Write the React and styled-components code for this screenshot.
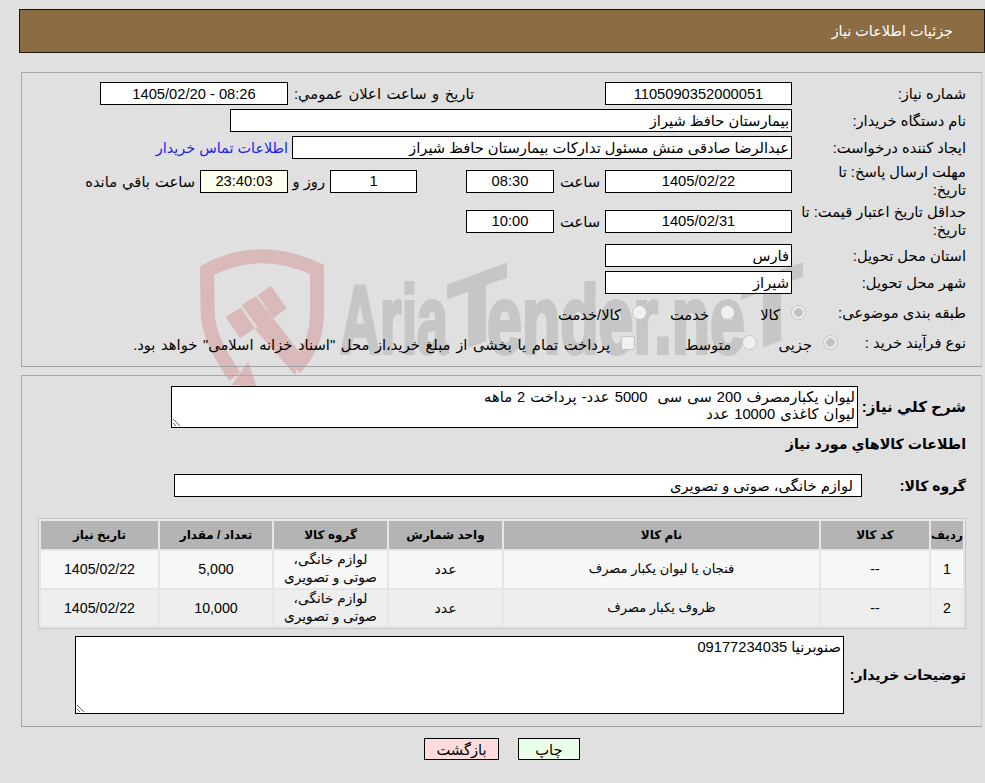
import styled, { createGlobalStyle } from "styled-components";

const GlobalStyle = createGlobalStyle`
  html, body {
    margin: 0;
    padding: 0;
    background: #e0e0e0;
  }
  body {
    color: #000;
    font-family: "Liberation Sans", "DejaVu Sans", sans-serif;
    font-size: 14.7px;
  }
`;

const Page = styled.div`
  position: relative;
  direction: rtl;
  width: 985px;
  height: 783px;
  overflow: hidden;
  padding-top: 9px;
  box-sizing: border-box;
`;

const Watermark = styled.svg`
  position: absolute;
  left: 190px;
  top: 240px;
`;

const Header = styled.div`
  position: relative;
  display: flex;
  align-items: center;
  box-sizing: border-box;
  height: 44px;
  margin-left: 19px;
  padding-right: 31px;
  background: #8c6c42;
  border: 1px solid #1a1408;
  color: #fff;
  font-size: 14.4px;
`;

const Panel = styled.div`
  position: relative;
  box-sizing: border-box;
  margin: ${(p) => p.$top}px 3px 0 21px;
  height: ${(p) => p.$height}px;
  padding: ${(p) => p.$pad}px 15px 0 0;
  border: 1px solid #a8a8a8;
  border-right-color: #c8c8c8;
  border-bottom-color: #a0a0a0;
`;

const Row = styled.div`
  display: flex;
  align-items: center;
  height: ${(p) => p.$h || 23}px;
  margin-top: ${(p) => p.$top ?? 4}px;
`;

const Label = styled.div`
  flex: none;
  box-sizing: border-box;
  width: ${(p) => p.$w || 174}px;
  line-height: 18px;
  font-weight: ${(p) => (p.$size ? 700 : 400)};
  font-size: ${(p) => (p.$size ? `${p.$size}px` : "inherit")};
`;

const Caption = styled.span`
  flex: none;
  width: ${(p) => p.$w}px;
  margin-right: ${(p) => p.$mr || 5}px;
  white-space: nowrap;
  word-spacing: ${(p) => p.$spread || 0}px;
`;

const Field = styled.input.attrs({ readOnly: true })`
  flex: none;
  box-sizing: border-box;
  width: ${(p) => p.$w}px;
  height: 23px;
  margin: 0 ${(p) => p.$mr || 0}px 0 0;
  padding: 0 ${(p) => p.$inset || 2}px;
  border: 1px solid #000;
  border-radius: 0;
  outline: none;
  background: ${(p) => p.$bg || "#fff"};
  color: #000;
  font: inherit;
  text-align: ${(p) => (p.$center ? "center" : "right")};
`;

const ContactLink = styled.a`
  margin-right: 4px;
  color: #2222ee;
  font-size: 14.4px;
  white-space: nowrap;
`;

const Option = styled.label`
  flex: none;
  display: flex;
  align-items: center;
  gap: 11px;
  width: ${(p) => p.$w}px;
  white-space: nowrap;
`;

const OptionText = styled.span`
  position: relative;
  top: 2px;
  word-spacing: ${(p) => p.$spread || 0}px;
`;

const Radio = styled.input.attrs({ type: "radio", disabled: true })`
  flex: none;
  appearance: none;
  box-sizing: border-box;
  width: 15px;
  height: 15px;
  margin: 0;
  border: 1px solid #c4c4c4;
  border-radius: 50%;
  background: #f0f0f0;

  &:checked {
    background: radial-gradient(circle, #c2c2c2 0 4px, #ececec 4.6px);
  }
`;

const Tick = styled.input.attrs({ type: "checkbox", disabled: true })`
  flex: none;
  appearance: none;
  box-sizing: border-box;
  width: 14px;
  height: 14px;
  margin: 0;
  border: 1px solid #c4c4c4;
  border-radius: 2px;
  background: #f0f0f0;
`;

const Note = styled.textarea.attrs({ readOnly: true })`
  flex: none;
  display: block;
  box-sizing: border-box;
  width: ${(p) => p.$w}px;
  height: ${(p) => p.$h}px;
  margin: 0;
  padding: 2px 2px 0;
  border: 1px solid #000;
  border-radius: 0;
  outline: none;
  background: #fff;
  color: #000;
  font: inherit;
  line-height: 17px;
  word-spacing: ${(p) => p.$spread || 0}px;
  overflow: hidden;
`;

const Grid = styled.table`
  box-sizing: border-box;
  width: 928px;
  height: 111px;
  margin: 21px 0 0 0;
  border: 1px solid #c6c6c6;
  border-spacing: 2px;
  background: #e6e6e6;
  table-layout: fixed;
  font-size: 14.2px;
`;

const Head = styled.th`
  height: 28px;
  padding: 0;
  background: #b4b4b4;
  font-size: 12px;
  font-weight: 700;
`;

const Cell = styled.td`
  padding: 0;
  background: ${(p) => (p.$even ? "#eeeeee" : "#f7f7f7")};
  font-size: ${(p) => p.$size}px;
  line-height: 18px;
  text-align: center;
  white-space: pre-line;
`;

const Actions = styled.div`
  display: flex;
  justify-content: center;
  gap: 19px;
  margin-top: 11px;
  padding-left: 19px;
`;

const Button = styled.button`
  box-sizing: border-box;
  width: ${(p) => p.$w}px;
  height: 22px;
  padding: 0;
  border: 1px solid #000;
  background: ${(p) => p.$bg};
  color: #000;
  font: inherit;
`;

const columns = [
  { title: "ردیف", width: 32, size: 14.2 },
  { title: "کد کالا", width: 108, size: 14.2 },
  { title: "نام کالا", width: 315, size: 13 },
  { title: "واحد شمارش", width: 113, size: 14.2 },
  { title: "گروه کالا", width: 113, size: 13.7 },
  { title: "تعداد / مقدار", width: 112, size: 14.2 },
  { title: "تاریخ نیاز", width: 117, size: 14.2 },
];

const items = [
  ["1", "--", "فنجان یا لیوان یکبار مصرف", "عدد", "لوازم خانگی،\nصوتی و تصویری", "5,000", "1405/02/22"],
  ["2", "--", "ظروف یکبار مصرف", "عدد", "لوازم خانگی،\nصوتی و تصویری", "10,000", "1405/02/22"],
];

function Logo() {
  return (
    <Watermark width="620" height="150" viewBox="0 0 620 150">
      <g transform="scale(0.3333)" fill="#d9b9b9">
        <path
          d="M315 385 C365 330 380 280 381 220 L381 88 C325 62 270 49 215 49 C160 49 105 62 51 92 L53 220 C55 280 85 340 135 410"
          fill="none"
          stroke="#d9b9b9"
          strokeWidth="42"
        />
        <polygon points="175,365 200,440 125,435" />
        <polygon points="195,268 250,235 335,345 315,405" />
        <polygon points="107,230 152,203 195,265 150,295" />
        <polygon points="155,195 197,168 250,235 205,265" />
        <polygon points="203,165 243,138 290,205 250,235" />
      </g>
      <g fill="#c6c6c6" stroke="#c6c6c6" strokeWidth="4" fontFamily="Liberation Sans" fontWeight="700" fontSize="97" direction="ltr">
        <text x="150" y="113" textLength="108" lengthAdjust="spacingAndGlyphs">Aria</text>
        <text transform="translate(258 113) skewY(-20)" textLength="58" lengthAdjust="spacingAndGlyphs">T</text>
        <text x="297" y="113" textLength="258" lengthAdjust="spacingAndGlyphs">ender.ne</text>
        <text transform="translate(552 113) skewY(-20)" textLength="60" lengthAdjust="spacingAndGlyphs">T</text>
      </g>
    </Watermark>
  );
}

export default function App() {
  return (
    <Page>
      <GlobalStyle />
      <Logo />
      <Header>جزئیات اطلاعات نیاز</Header>

      <Panel $top={19} $height={295} $pad={9}>
        <Row $top={0}>
          <Label>شماره نیاز:</Label>
          <Field $w={187} $center value="1105090352000051" />
          <Caption $w={181} $mr={131} $spread={1.5}>تاريخ و ساعت اعلان عمومي:</Caption>
          <Field $w={188} $mr={5} $center value="08:26 - 1405/02/20" />
        </Row>
        <Row>
          <Label>نام دستگاه خریدار:</Label>
          <Field $w={562} value="بیمارستان حافظ شیراز" />
        </Row>
        <Row>
          <Label>ایجاد کننده درخواست:</Label>
          <Field $w={500} value="عبدالرضا صادقی منش مسئول تدارکات بیمارستان حافظ شیراز" />
          <ContactLink>اطلاعات تماس خریدار</ContactLink>
        </Row>
        <Row $h={40} $top={2}>
          <Label>مهلت ارسال پاسخ: تا<br />تاریخ:</Label>
          <Field $w={187} $center value="1405/02/22" />
          <Caption $w={46}>ساعت</Caption>
          <Field $w={88} $center value="08:30" />
          <Field $w={87} $mr={49} $center value="1" />
          <Caption $w={37}>روز و</Caption>
          <Field $w={88} $center $bg="#ffffee" value="23:40:03" />
          <Caption $w={112} $spread={1}>ساعت باقي مانده</Caption>
        </Row>
        <Row $h={40} $top={0}>
          <Label>حداقل تاریخ اعتبار قیمت: تا<br />تاریخ:</Label>
          <Field $w={187} $center value="1405/02/31" />
          <Caption $w={46}>ساعت</Caption>
          <Field $w={88} $center value="10:00" />
        </Row>
        <Row $top={3}>
          <Label>استان محل تحویل:</Label>
          <Field $w={187} value="فارس" />
        </Row>
        <Row>
          <Label>شهر محل تحویل:</Label>
          <Field $w={187} value="شیراز" />
        </Row>
        <Row $top={7}>
          <Label $w={160}>طبقه بندی موضوعی:</Label>
          <Option $w={71}><Radio name="kind" defaultChecked /><OptionText>کالا</OptionText></Option>
          <Option $w={88}><Radio name="kind" /><OptionText>خدمت</OptionText></Option>
          <Option $w={100}><Radio name="kind" /><OptionText>کالا/خدمت</OptionText></Option>
        </Row>
        <Row $top={7}>
          <Label $w={128}>نوع فرآیند خرید :</Label>
          <Option $w={81}><Radio name="flow" defaultChecked /><OptionText>جزیی</OptionText></Option>
          <Option $w={122}><Radio name="flow" /><OptionText>متوسط</OptionText></Option>
          <Option $w={490}><Tick /><OptionText $spread={1.6}>پرداخت تمام یا بخشی از مبلغ خرید،از محل "اسناد خزانه اسلامی" خواهد بود.</OptionText></Option>
        </Row>
      </Panel>

      <Panel $top={8} $height={352} $pad={10}>
        <Row $h={42} $top={0}>
          <Label $w={108} $size={15}>شرح کلي نیاز:</Label>
          <Note $w={687} $h={42} $spread={1} defaultValue={"لیوان یکبارمصرف 200 سی سی  5000 عدد- پرداخت 2 ماهه\nلیوان کاغذی 10000 عدد"} />
        </Row>
        <Row $h={20} $top={6}>
          <Label $w={300} $size={14.2}>اطلاعات کالاهاي مورد نياز</Label>
        </Row>
        <Row $top={20}>
          <Label $w={104} $size={14}>گروه کالا:</Label>
          <Field $w={688} $inset={8} value="لوازم خانگی، صوتی و تصویری" />
        </Row>
        <Grid>
          <colgroup>
            {columns.map((column) => <col key={column.title} width={column.width} />)}
          </colgroup>
          <thead>
            <tr>{columns.map((column) => <Head key={column.title}>{column.title}</Head>)}</tr>
          </thead>
          <tbody>
            {items.map((item, i) => (
              <tr key={item[0]}>
                {item.map((value, j) => <Cell key={j} $even={i === 1} $size={columns[j].size}>{value}</Cell>)}
              </tr>
            ))}
          </tbody>
        </Grid>
        <Row $h={78} $top={7}>
          <Label $w={122} $size={14}>توضیحات خریدار:</Label>
          <Note $w={769} $h={78} defaultValue="صنوبرنیا 09177234035" />
        </Row>
      </Panel>

      <Actions>
        <Button $w={62} $bg="#eaffea">چاپ</Button>
        <Button $w={75} $bg="#ffdcdc">بازگشت</Button>
      </Actions>
    </Page>
  );
}
